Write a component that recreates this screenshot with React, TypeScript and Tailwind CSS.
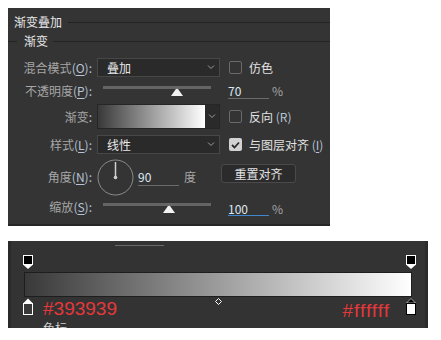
import React from "react";

const Chevron = () => (
  <svg width="8" height="5" viewBox="0 0 8 5">
    <path d="M1 0.5l3 3 3-3" stroke="#9a9a9a" fill="none" strokeWidth="1" />
  </svg>
);

const Thumb = () => (
  <svg width="12" height="8" viewBox="0 0 12 8">
    <path d="M0 8 L4.6 1.6 Q6 0 7.4 1.6 L12 8 Z" fill="#f2f2f2" />
  </svg>
);

function Label({ text, k }: { text: string; k?: string }) {
  return (
    <div className="w-[84px] shrink-0 text-right text-[12px] leading-[14px] text-[#a6a6a6]">
      {text}
      {k && (
        <span className="text-[#b7c3d4]">
          (<span className="underline underline-offset-2">{k}</span>)
        </span>
      )}
      <span className="text-[#b7c3d4]">:</span>
    </div>
  );
}

function Check({ label, checked }: { label: React.ReactNode; checked?: boolean }) {
  return (
    <div className="ml-[9px] flex items-center">
      {checked ? (
        <div className="flex h-[13px] w-[13px] items-center justify-center rounded-[2px] bg-[#d2d2d2]">
          <svg width="9" height="8" viewBox="0 0 9 8">
            <path d="M1 4 L3.5 6.5 L8 1.5" stroke="#2a2a2a" strokeWidth="1.8" fill="none" />
          </svg>
        </div>
      ) : (
        <div className="h-[13px] w-[13px] rounded-[2px] border border-[#6a6a6a]" />
      )}
      <span className="ml-[7px] text-[12px] leading-[14px] text-[#e2e2e2]">{label}</span>
    </div>
  );
}

function Select({ value }: { value: string }) {
  return (
    <div className="ml-[5px] flex h-full w-[123px] items-center justify-between border border-[#474747] bg-[#2a2a2a] pl-[9px] pr-[4px] text-[12px] text-[#e8e8e8]">
      <span>{value}</span>
      <Chevron />
    </div>
  );
}

function Slider({ pos, top }: { pos: number; top: string }) {
  return (
    <div className={`ml-[5px] flex h-full w-[123px] flex-col pl-[6px] ${top}`}>
      <div className="h-[3px] w-[108px] bg-[#646464]" />
      <div className="-mt-px" style={{ marginLeft: pos }}>
        <Thumb />
      </div>
    </div>
  );
}

function StopTop() {
  return (
    <svg width="10" height="14" viewBox="0 0 10 14">
      <rect x="0.5" y="0.5" width="9" height="9" fill="#000" stroke="#fff" />
      <path d="M0.5 10 L9.5 10 L5 14 Z" fill="#fff" />
    </svg>
  );
}

function StopBottom({ fill, tri }: { fill: string; tri: string }) {
  return (
    <svg width="10" height="17" viewBox="0 0 10 17">
      <path d="M5 0.5 L9.5 5 L0.5 5 Z" fill={tri} stroke={tri === "#000" ? "#fff" : "none"} strokeWidth="0.6" />
      <rect x="0.5" y="5.5" width="9" height="11" fill={fill} stroke={fill === "#fff" ? "#000" : "#fff"} />
    </svg>
  );
}

export default function App() {
  return (
    <div className="h-[340px] w-[441px] overflow-hidden bg-white pt-[8px] font-['Noto_Sans_CJK_SC','Noto_Sans',sans-serif]">
      <div className="ml-[8px] h-[218px] w-[322px] border-b-2 border-[#262626] bg-[#343434]">
        {/* title */}
        <div className="flex h-[14px] items-center pt-[7px] box-content">
          <span className="pl-[6px] text-[12px] leading-[14px] text-[#e6e6e6]">渐变叠加</span>
          <div className="ml-[6px] h-px flex-1 bg-[#232323]" />
        </div>
        <div className="mt-[5px] flex h-[14px] items-center">
          <div className="h-px w-[9px] bg-[#232323]" />
          <span className="ml-[7px] text-[12px] leading-[14px] text-[#e6e6e6]">渐变</span>
          <div className="ml-[5px] h-px flex-1 bg-[#232323]" />
        </div>

        {/* blend mode */}
        <div className="mt-[10px] flex h-[19px] items-center">
          <Label text="混合模式" k="O" />
          <Select value="叠加" />
          <Check label="仿色" />
        </div>

        {/* opacity */}
        <div className="flex h-[27px] items-start">
          <div className="mt-[7px]">
            <Label text="不透明度" k="P" />
          </div>
          <Slider pos={68} top="pt-[9px]" />
          <div className="ml-[8px] mt-[7px] h-[15px] w-[41px] border-b border-[#6b6b6b] text-[12px] leading-[13px] text-[#dfe8f2]">
            70
          </div>
          <span className="ml-[3px] mt-[7px] text-[12px] leading-[13px] text-[#a6a6a6]">%</span>
        </div>

        {/* gradient */}
        <div className="flex h-[25px] items-center">
          <Label text="渐变" />
          <div className="ml-[5px] flex h-full w-[123px] border border-[#262626]">
            <div className="h-full flex-1 bg-[linear-gradient(to_right,#393939,#ffffff)]" />
            <div className="flex h-full w-[14px] items-center justify-center bg-[#2a2a2a]">
              <Chevron />
            </div>
          </div>
          <Check
            label={
              <>
                反向 <span className="text-[#b7c3d4]">(R)</span>
              </>
            }
          />
        </div>

        {/* style */}
        <div className="mt-[6px] flex h-[19px] items-center">
          <Label text="样式" k="L" />
          <Select value="线性" />
          <Check
            checked
            label={
              <>
                与图层对齐 <span className="text-[#b7c3d4]">(<span className="underline underline-offset-2">I</span>)</span>
              </>
            }
          />
        </div>

        {/* angle */}
        <div className="mt-[5px] flex h-[36px] items-center">
          <Label text="角度" k="N" />
          <div className="ml-[5px] shrink-0">
            <svg width="37" height="37" viewBox="0 0 37 37">
              <circle cx="18.5" cy="18.5" r="17.5" fill="none" stroke="#8c8c8c" strokeWidth="1" />
              <line x1="18.5" y1="18.5" x2="18.5" y2="3" stroke="#cfcfcf" strokeWidth="1.5" />
              <circle cx="18.5" cy="18.5" r="1.8" fill="#cfcfcf" />
            </svg>
          </div>
          <div className="ml-[4px] mt-[2px] h-[16px] w-[41px] border-b border-[#6b6b6b] text-[12px] leading-[13px] text-[#dfe8f2]">
            90
          </div>
          <span className="ml-[5px] text-[12px] text-[#a6a6a6]">度</span>
          <div className="ml-[25px] mt-[-7px] flex h-[19px] w-[75px] items-center justify-center rounded-[3px] border border-[#4a4a4a] bg-[#2b2b2b] text-[12px] text-[#e2e2e2]">
            重置对齐
          </div>
        </div>

        {/* scale */}
        <div className="flex h-[23px] items-start">
          <div className="mt-[5px]">
            <Label text="缩放" k="S" />
          </div>
          <Slider pos={60} top="pt-[8px]" />
          <div className="ml-[8px] mt-[7px] h-[14px] w-[41px] border-b border-[#3f87d0] text-[12px] leading-[13px] text-[#dfe8f2]">
            100
          </div>
          <span className="ml-[3px] mt-[7px] text-[12px] leading-[13px] text-[#a6a6a6]">%</span>
        </div>
      </div>

      {/* gradient editor */}
      <div className="ml-[8px] mt-[15px] h-[87px] w-[420px] overflow-hidden border-x-[3px] border-[#2a2a2a] bg-[#333333]">
        <div className="h-[14px] pl-[104px] pt-[4px]">
          <div className="h-px w-[49px] bg-[#6a6a6a]" />
        </div>
        <div className="flex h-[14px] justify-between pl-[12px] pr-[9px]">
          <StopTop />
          <StopTop />
        </div>
        <div className="mx-[13px] mt-[3px] h-[25px] border border-[#1e1e1e] bg-[linear-gradient(to_right,#393939,#ffffff)]" />
        <div className="relative flex justify-between pl-[12px] pr-[9px]">
          <div className="flex">
            <div className="mt-[1px]">
              <StopBottom fill="#393939" tri="#fff" />
            </div>
            <div className="ml-[10px] flex flex-col">
              <span className="mt-[2px] font-['Liberation_Sans',Arial,sans-serif] text-[19px] leading-[19px] text-[#e5383b]">
                #393939
              </span>
              <span className="mt-[4px] text-[12px] leading-[12px] text-[#d0d0d0]">色标</span>
            </div>
          </div>
          <div className="absolute left-[204px] top-[1px]">
            <svg width="7" height="7" viewBox="0 0 7 7">
              <path d="M3.5 0.5 L6.5 3.5 L3.5 6.5 L0.5 3.5 Z" fill="#333" stroke="#fff" />
            </svg>
          </div>
          <div className="flex">
            <span className="mr-[16px] mt-[4px] font-['Liberation_Sans',Arial,sans-serif] text-[19px] leading-[19px] tracking-[1px] text-[#e5383b]">
              #ffffff
            </span>
            <div className="mt-[1px]">
              <StopBottom fill="#fff" tri="#000" />
            </div>
          </div>
        </div>
      </div>
    </div>
  );
}
